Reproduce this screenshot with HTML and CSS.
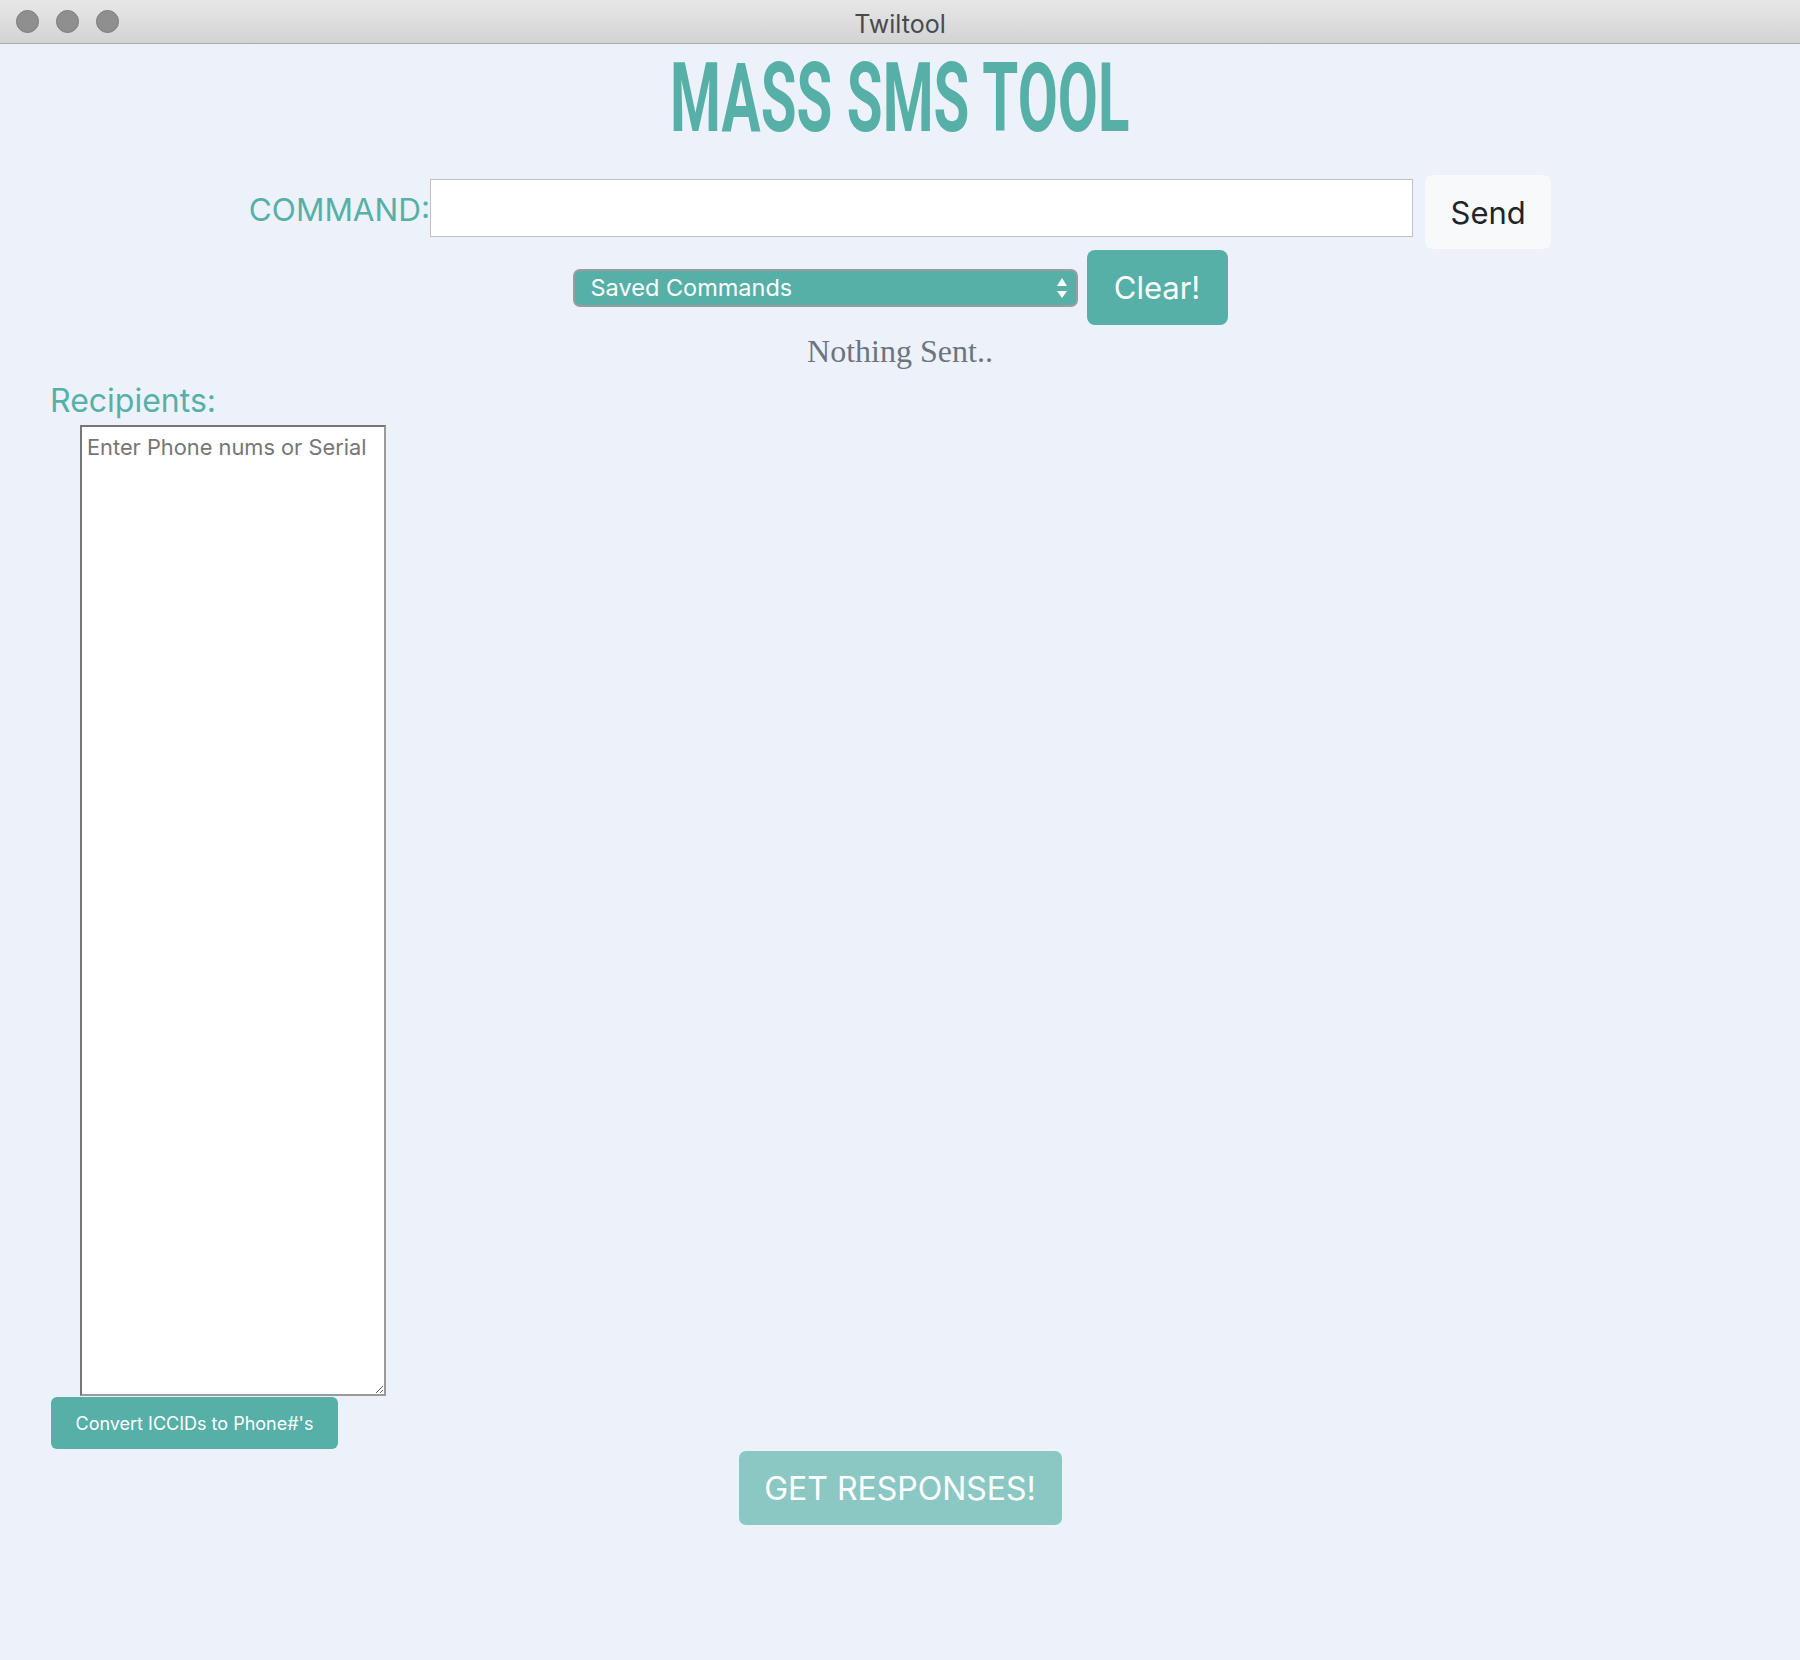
FILE: index.html
```html
<!DOCTYPE html>
<html lang="en">
<head>
<meta charset="utf-8">
<title>Twiltool</title>
<link rel="stylesheet" href="styles.css">
</head>
<body>
<div class="window">
  <header class="titlebar">
    <div class="lights">
      <span class="light"></span>
      <span class="light"></span>
      <span class="light"></span>
    </div>
    <div class="wtitle">Twiltool</div>
    <div class="spacer"></div>
  </header>

  <main class="app">
    <h1 class="brand"><span class="brand-text">MASS SMS TOOL</span></h1>

    <div class="cmd-row">
      <label class="cmd-label" for="cmd">COMMAND:</label>
      <input class="cmd-input" id="cmd" type="text">
      <button class="btn btn-send" type="button">Send</button>
    </div>

    <div class="saved-row">
      <div class="select-wrap">
        <select class="saved-select">
          <option>Saved Commands</option>
        </select>
        <svg class="select-arrows" width="12" height="22" viewBox="0 0 12 22" aria-hidden="true">
          <path d="M6 1 L11 9 L1 9 Z" fill="#ffffff"/>
          <path d="M1 14 L11 14 L6 21 Z" fill="#ffffff"/>
        </svg>
      </div>
      <button class="btn btn-clear" type="button">Clear!</button>
    </div>

    <p class="status">Nothing Sent..</p>

    <section class="recipients">
      <label class="rec-label" for="rec">Recipients:</label>
      <textarea class="rec-input" id="rec" placeholder="Enter Phone nums or Serial"></textarea>
      <button class="btn btn-convert" type="button">Convert ICCIDs to Phone#'s</button>
    </section>

    <div class="responses-row">
      <button class="btn btn-get" type="button">GET RESPONSES!</button>
    </div>
  </main>
</div>
</body>
</html>
```

FILE: styles.css
```css
* { box-sizing: border-box; }

html, body {
  margin: 0;
  padding: 0;
}

body {
  background: #edf2fa;
  font-family: Inter, "Noto Sans", "Liberation Sans", sans-serif;
  color: #212529;
}

.window {
  width: 1800px;
  min-height: 1660px;
  background: #edf2fa;
}

/* ---------- title bar ---------- */
.titlebar {
  height: 44px;
  display: grid;
  grid-template-columns: 1fr auto 1fr;
  align-items: center;
  background: linear-gradient(#e7e7e7, #d3d3d3);
  border-bottom: 1px solid #ababab;
}

.lights {
  display: flex;
  gap: 17px;
  padding-left: 16px;
}

.light {
  width: 23px;
  height: 23px;
  border-radius: 50%;
  background: #8f8f8f;
  border: 1px solid #7c7c7c;
}

.wtitle {
  font-family: Inter, "Noto Sans", sans-serif;
  font-size: 25px;
  color: #4a4a4a;
  padding-top: 4px;
}

/* ---------- app ---------- */
.app {
  display: flex;
  flex-direction: column;
  align-items: center;
}

.brand {
  margin: 6px 0 0;
  height: 97px;
  font-family: Roboto, "Liberation Sans", sans-serif;
  font-weight: 700;
  font-size: 97px;
  line-height: 97px;
  color: #56b0a8;
  white-space: nowrap;
}

.brand-text {
  display: inline-block;
  transform: scaleX(0.6);
  transform-origin: center;
}

/* command row */
.cmd-row {
  margin-top: 28px;
  display: flex;
  align-items: center;
  height: 74px;
}

.cmd-label {
  font-size: 31.5px;
  color: #56b0a8;
  margin-bottom: 6px;
}

.cmd-input {
  width: 983px;
  height: 58px;
  margin-bottom: 8px;
  border: 1px solid #c2c2c2;
  background: #ffffff;
  font-size: 28px;
  padding: 0 10px;
}

.btn {
  border: none;
  font-family: Inter, "Noto Sans", sans-serif;
  cursor: pointer;
}

.btn-send {
  margin-left: 12px;
  width: 126px;
  height: 74px;
  border-radius: 8px;
  background: #f8f9fa;
  color: #212529;
  font-size: 31px;
}

/* saved row */
.saved-row {
  margin-top: 1px;
  display: flex;
  align-items: center;
  height: 75px;
}

.select-wrap {
  position: relative;
  width: 505px;
  height: 38px;
}

.saved-select {
  appearance: none;
  -webkit-appearance: none;
  width: 100%;
  height: 100%;
  border: 2px solid #9c9c9c;
  border-radius: 7px;
  background: #56b0a8;
  color: #ffffff;
  font-family: Inter, "Noto Sans", sans-serif;
  font-size: 23.5px;
  padding: 0 0 1px 16px;
}

.select-arrows {
  position: absolute;
  right: 10px;
  top: 8px;
}

.btn-clear {
  margin-left: 9px;
  width: 141px;
  height: 75px;
  border-radius: 8px;
  background: #56b0a8;
  color: #ffffff;
  font-size: 31px;
}

/* status */
.status {
  margin: 0;
  font-family: "Liberation Serif", "Times New Roman", serif;
  font-size: 32px;
  line-height: 52px;
  color: #6c757d;
}

/* recipients */
.recipients {
  align-self: flex-start;
  margin-left: 50px;
  display: flex;
  flex-direction: column;
  align-items: flex-start;
}

.rec-label {
  font-size: 32px;
  line-height: 48px;
  color: #56b0a8;
}

.rec-input {
  margin-left: 30px;
  width: 306px;
  height: 971px;
  border: 2px solid #8c8c8c;
  border-color: #777777 #9a9a9a #9a9a9a #777777;
  background: #ffffff;
  font-family: Inter, "Noto Sans", sans-serif;
  font-size: 21.8px;
  padding: 7px 5px;
  resize: vertical;
}

.rec-input::placeholder {
  color: #767676;
}

.btn-convert {
  margin-top: 1px;
  margin-left: 1px;
  width: 287px;
  height: 52px;
  border-radius: 6px;
  background: #56b0a8;
  color: #ffffff;
  font-size: 18px;
}

/* responses */
.responses-row {
  display: flex;
  justify-content: center;
  margin-top: 2px;
}

.btn-get {
  width: 323px;
  height: 74px;
  border-radius: 7px;
  background: #8bc7c3;
  color: #ffffff;
  font-size: 32px;
}
```
